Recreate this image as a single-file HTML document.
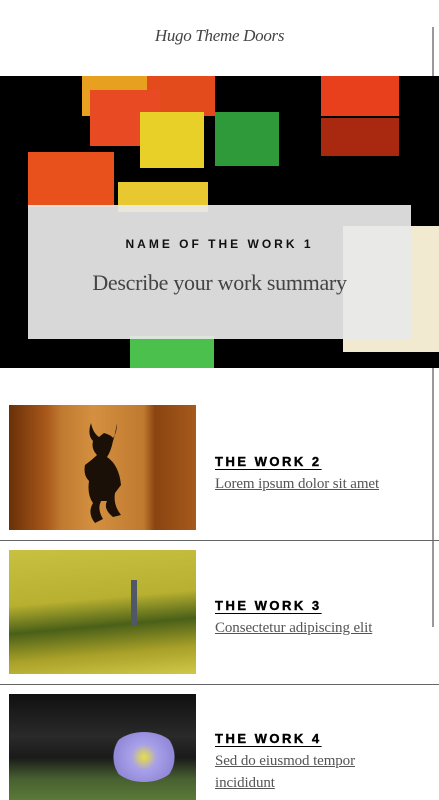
<!DOCTYPE html>
<html><head><meta charset="utf-8"><style>
*{margin:0;padding:0;box-sizing:border-box}
body{width:439px;height:800px;overflow:hidden;background:#fff;position:relative;font-family:"Liberation Serif",serif}
.abs{position:absolute}
.h{top:26px;left:0;width:439px;text-align:center;font-style:italic;font-size:17px;color:#444;letter-spacing:-0.3px}
.sb{left:432px;top:27px;width:2px;height:600px;background:#999}
.hero{left:0;top:76px;width:439px;height:292px;background:#000;overflow:hidden}
.l{position:absolute}
.ov{left:28px;top:205px;width:383px;height:134px;background:rgba(232,232,232,.93);text-align:center}
.t1{font-family:"Liberation Sans",sans-serif;font-weight:bold;font-size:12px;letter-spacing:3px;margin-top:32px;color:#111}
.s1{font-size:22px;color:#444;margin-top:19px;letter-spacing:-0.3px}
.img{left:9px;width:187px;overflow:hidden}
.line{left:0;width:439px;height:1px;background:#666}
.tt{left:215px;font-family:"Liberation Sans",sans-serif;font-weight:900;font-size:13px;letter-spacing:2.5px;color:#000;text-decoration:underline;text-underline-offset:3px;-webkit-text-stroke:0.4px #000}
.st{left:215px;font-size:15px;color:#555;text-decoration:underline;line-height:22px;width:200px;letter-spacing:-0.1px}
</style></head><body>
<div class="abs h">Hugo Theme Doors</div>
<div class="abs sb"></div>
<div class="abs hero">
<div class="l" style="left:82px;top:0;width:65px;height:40px;background:#e8a020"></div>
<div class="l" style="left:147px;top:0;width:68px;height:40px;background:#e34a1c"></div>
<div class="l" style="left:90px;top:14px;width:70px;height:56px;background:#e84a24"></div>
<div class="l" style="left:140px;top:36px;width:64px;height:56px;background:#e8d028"></div>
<div class="l" style="left:215px;top:36px;width:64px;height:54px;background:#2f9a3a"></div>
<div class="l" style="left:321px;top:0;width:78px;height:40px;background:#e8401c"></div>
<div class="l" style="left:321px;top:42px;width:78px;height:38px;background:#a82810"></div>
<div class="l" style="left:28px;top:76px;width:86px;height:55px;background:#e8501c"></div>
<div class="l" style="left:118px;top:106px;width:90px;height:30px;background:#e8c830"></div>
<div class="l" style="left:130px;top:260px;width:84px;height:32px;background:#4cc04c"></div>
<div class="l" style="left:343px;top:150px;width:96px;height:126px;background:#f2ead0"></div>
</div>
<div class="abs ov"><div class="t1">NAME OF THE WORK 1</div><div class="s1">Describe your work summary</div></div>

<div class="abs img" style="top:405px;height:125px;background:linear-gradient(90deg,#6a3008 0%,#a8581a 20%,#c07a30 28%,#d49040 45%,#c07a30 72%,#8a4410 78%,#a65a1c 100%)">
<svg width="187" height="125" style="position:absolute;left:0;top:0"><path d="M82 18 Q84 28 90 32 L95 28 Q102 30 104 33 Q108 28 108 18 Q106 30 104 36 Q102 46 98 52 Q110 60 112 80 L106 88 Q104 100 112 110 L104 112 Q94 104 98 96 L92 96 Q88 104 94 114 L86 118 Q78 108 84 98 Q78 90 80 76 Q74 70 76 60 Q84 54 88 50 Q82 44 84 36 Q78 30 82 18Z" fill="#1a1008"/></svg>
</div>
<div class="abs tt" style="top:454px">THE WORK 2</div>
<div class="abs st" style="top:473px">Lorem ipsum dolor sit amet</div>
<div class="abs line" style="top:540px"></div>

<div class="abs img" style="top:550px;height:124px;background:linear-gradient(175deg,#c8c040 0%,#b8b030 40%,#4a6018 60%,#a8a028 80%,#d0c848 100%)">
<div class="l" style="left:122px;top:30px;width:6px;height:45px;background:#505868"></div>
</div>
<div class="abs tt" style="top:598px">THE WORK 3</div>
<div class="abs st" style="top:617px">Consectetur adipiscing elit</div>
<div class="abs line" style="top:684px"></div>

<div class="abs img" style="top:694px;height:106px;background:linear-gradient(180deg,#101010 0%,#2a2a2a 40%,#1a1a1a 60%,#486030 80%,#5a7a38 100%)">
<div class="l" style="left:100px;top:38px;width:70px;height:50px;border-radius:50%;background:radial-gradient(circle,#e8e040 0%,#a8a0e8 30%,#9088d8 70%,transparent 72%)"></div>
</div>
<div class="abs tt" style="top:731px">THE WORK 4</div>
<div class="abs st" style="top:750px">Sed do eiusmod tempor incididunt</div>
</body></html>
